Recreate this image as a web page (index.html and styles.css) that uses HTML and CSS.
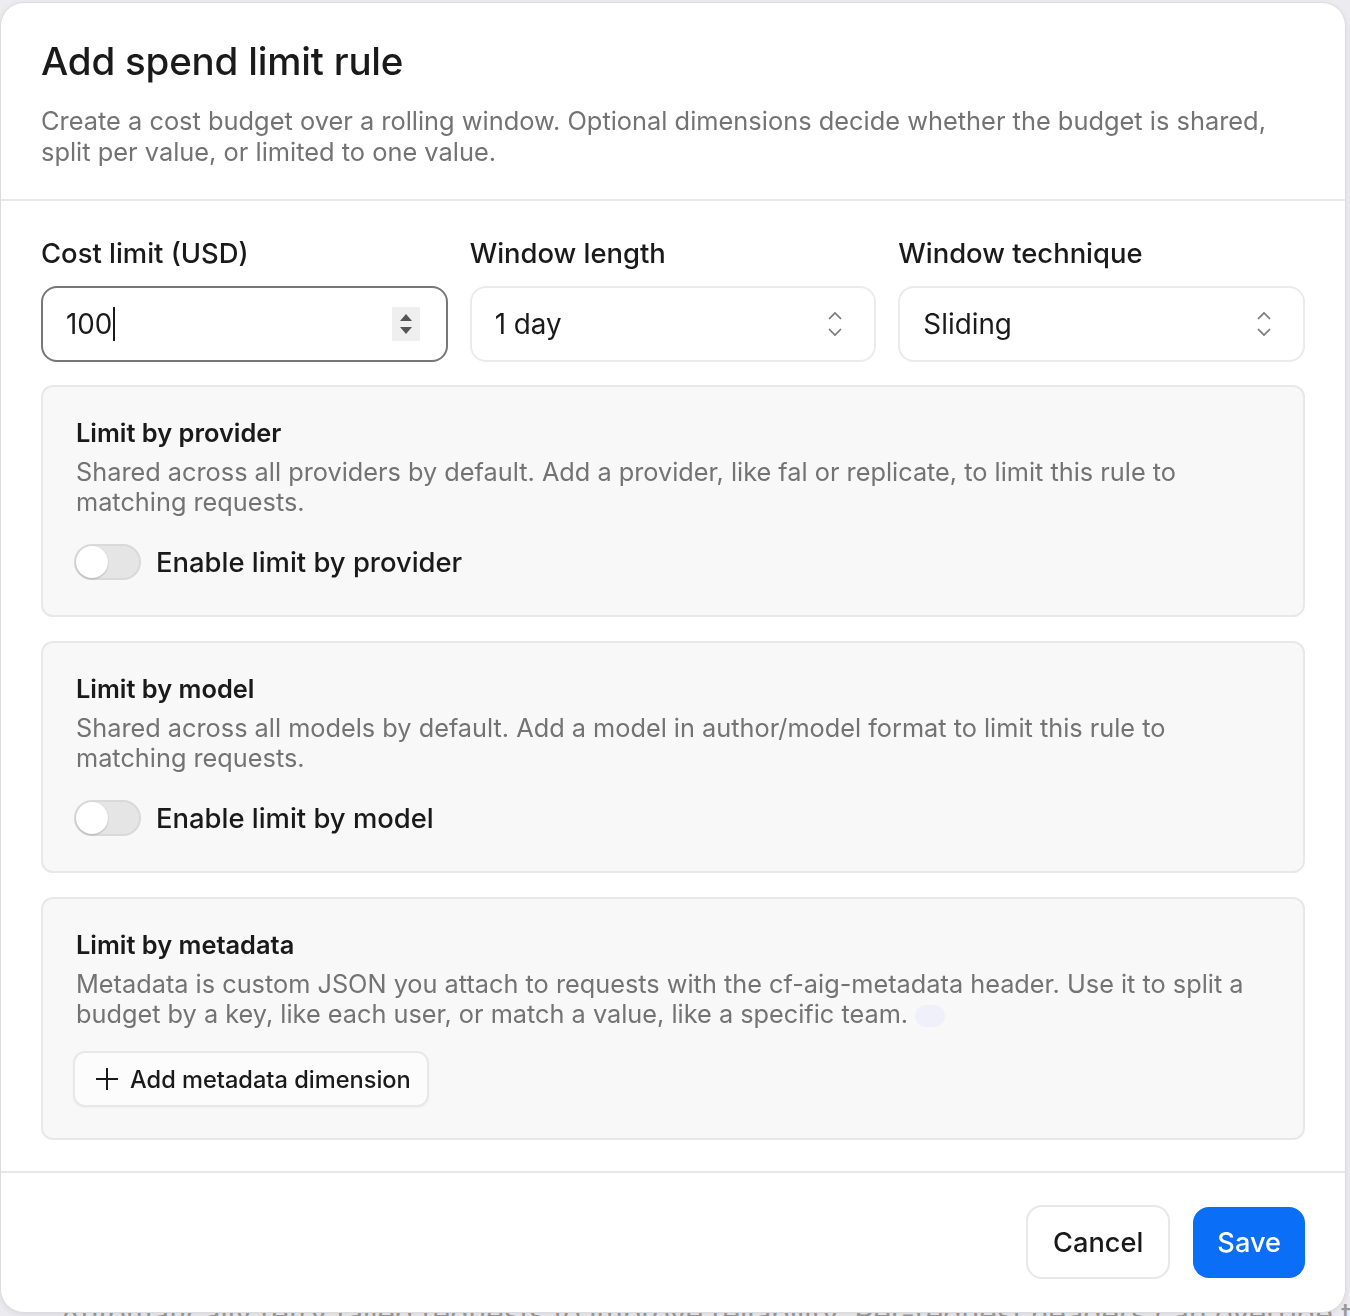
FILE: index.html
```html
<!DOCTYPE html>
<html>
<head>
  <meta charset="utf-8">
  <title>Add spend limit rule</title>
  <link rel="stylesheet" href="styles.css">
</head>
<body>
  <!-- Page behind the modal -->
  <div class="page">
    <p class="page-note">Automatically retry failed requests to improve reliability. Per-request headers can override these defaults.</p>
  </div>

  <div class="dialog">
    <div class="dialog-header">
      <h1>Add spend limit rule</h1>
      <p class="dialog-description">Create a cost budget over a rolling window. Optional dimensions decide whether the budget is shared, split per value, or limited to one value.</p>
    </div>

    <div class="dialog-body">
      <!-- Main fields -->
      <div class="field-row">
        <div class="field">
          <label class="field-label">Cost limit (USD)</label>
          <div class="control focused">
            <span class="control-value">100<span class="caret"></span></span>
            <span class="spinner">
              <svg width="16" height="28" viewBox="0 0 16 28"><path d="M8 4 L14 11 L2 11 Z" fill="#555"/><path d="M2 17 L14 17 L8 24 Z" fill="#555"/></svg>
            </span>
          </div>
        </div>
        <div class="field">
          <label class="field-label">Window length</label>
          <div class="control">
            <span class="control-value">1 day</span>
            <svg class="chevrons" width="20" height="30" viewBox="0 0 20 30"><path d="M4 10 L10 4 L16 10" fill="none" stroke="#777" stroke-width="1.6"/><path d="M4 20 L10 26 L16 20" fill="none" stroke="#777" stroke-width="1.6"/></svg>
          </div>
        </div>
        <div class="field">
          <label class="field-label">Window technique</label>
          <div class="control">
            <span class="control-value">Sliding</span>
            <svg class="chevrons" width="20" height="30" viewBox="0 0 20 30"><path d="M4 10 L10 4 L16 10" fill="none" stroke="#777" stroke-width="1.6"/><path d="M4 20 L10 26 L16 20" fill="none" stroke="#777" stroke-width="1.6"/></svg>
          </div>
        </div>
      </div>

      <!-- Dimension cards -->
      <div class="dimension-card">
        <h3>Limit by provider</h3>
        <p class="card-description">Shared across all providers by default. Add a provider, like fal or replicate, to limit this rule to matching requests.</p>
        <div class="switch-row">
          <span class="switch"><span class="switch-knob"></span></span>
          <span class="switch-label">Enable limit by provider</span>
        </div>
      </div>

      <div class="dimension-card">
        <h3>Limit by model</h3>
        <p class="card-description">Shared across all models by default. Add a model in author/model format to limit this rule to matching requests.</p>
        <div class="switch-row">
          <span class="switch"><span class="switch-knob"></span></span>
          <span class="switch-label">Enable limit by model</span>
        </div>
      </div>

      <div class="dimension-card metadata-card">
        <h3>Limit by metadata</h3>
        <p class="card-description">Metadata is custom JSON you attach to requests with the cf-aig-metadata header. Use it to split a budget by a key, like each user, or match a value, like a specific team. <span class="hint-dot"></span></p>
        <button class="add-button">
          <svg width="26" height="26" viewBox="0 0 26 26"><path d="M13 2 V24 M2 13 H24" stroke="#1a1a1a" stroke-width="2"/></svg>
          <span>Add metadata dimension</span>
        </button>
      </div>
    </div>

    <div class="dialog-footer">
      <button class="btn btn-secondary">Cancel</button>
      <button class="btn btn-primary">Save</button>
    </div>
  </div>
</body>
</html>
```

FILE: styles.css
```css
body {
  margin: 0;
  font-family: Inter, 'Noto Sans', sans-serif;
  color: #1a1a1a;
  background: #ebebf0;
}

.page {
  padding: 1296px 0 0 60px;
  height: 20px;
  overflow: hidden;
}

.page-note {
  margin: 0;
  font-size: 30px;
  line-height: 36px;
  color: #9a9a9a;
  white-space: nowrap;
}

/* Modal */
.dialog {
  position: fixed;
  top: 2px;
  left: 0;
  width: 1346px;
  box-sizing: border-box;
  background: white;
  border: 1px solid #dcdcdc;
  border-radius: 24px;
  box-shadow: 0 2px 6px rgba(0, 0, 0, 0.08);
}

.dialog-header {
  padding: 36px 40px 32px;
  border-bottom: 2px solid #e8e8e8;
}

.dialog-header h1 {
  margin: 0 0 22px 0;
  font-size: 38.5px;
  font-weight: 500;
  line-height: 44px;
  letter-spacing: -0.2px;
}

.dialog-description {
  margin: 0;
  font-size: 25.4px;
  line-height: 31px;
  color: #737373;
}

.dialog-body {
  padding: 34px 40px 31px;
  display: flex;
  flex-direction: column;
  gap: 24px;
}

.field-row {
  display: grid;
  grid-template-columns: repeat(3, 1fr);
  gap: 22px;
  margin-bottom: -1px;
}

.field {
  display: flex;
  flex-direction: column;
  gap: 15px;
}

.field-label {
  font-size: 27.4px;
  font-weight: 500;
  line-height: 36px;
}

.control {
  height: 76px;
  box-sizing: border-box;
  border: 2px solid #ebebeb;
  border-radius: 16px;
  padding: 0 26px 0 23px;
  display: flex;
  align-items: center;
  justify-content: space-between;
}

.control.focused {
  border-color: #777;
}

.control-value {
  font-size: 27.8px;
  display: flex;
  align-items: center;
}

.caret {
  display: inline-block;
  width: 2px;
  height: 34px;
  background: #1a1a1a;
  margin-left: 1px;
}

.spinner {
  width: 28px;
  height: 34px;
  background: #efefef;
  display: flex;
  align-items: center;
  justify-content: center;
}

.chevrons {
  margin-right: 3px;
}

/* Dimension cards */
.dimension-card {
  background: #f8f8f8;
  border: 2px solid #e8e8e8;
  border-radius: 12px;
  padding: 30px 33px 35px;
}

.dimension-card h3 {
  margin: 0 0 8px 0;
  font-size: 25.4px;
  font-weight: 600;
  line-height: 32px;
}

.card-description {
  margin: 0;
  font-size: 25.3px;
  line-height: 30px;
  color: #737373;
}

.hint-dot {
  display: inline-block;
  width: 30px;
  height: 22px;
  border-radius: 11px;
  background: #f0f0fb;
  vertical-align: middle;
}

.switch-row {
  display: flex;
  align-items: center;
  gap: 15px;
  margin-top: 27px;
  margin-left: -2px;
}

.switch {
  width: 67px;
  height: 36px;
  box-sizing: border-box;
  border-radius: 18px;
  background: #e5e5e5;
  border: 2px solid #d9d9d9;
  display: flex;
  align-items: center;
}

.switch-knob {
  width: 32px;
  height: 32px;
  border-radius: 50%;
  background: white;
  box-shadow: 0 1px 2px rgba(0, 0, 0, 0.2);
}

.switch-label {
  font-size: 27.4px;
  font-weight: 500;
}

.add-button {
  margin-top: 22px;
  margin-left: -3px;
  display: flex;
  align-items: center;
  gap: 10px;
  height: 56px;
  padding: 0 16px 0 19px;
  border: 2px solid #e8e8e8;
  border-radius: 12px;
  background: #fcfcfc;
  font-family: inherit;
  font-size: 23.6px;
  font-weight: 500;
  color: #1a1a1a;
  box-shadow: 0 1px 2px rgba(0, 0, 0, 0.04);
}

.metadata-card {
  padding-bottom: 31px;
}

/* Footer */
.dialog-footer {
  border-top: 2px solid #e8e8e8;
  padding: 32px 40px 33px;
  display: flex;
  justify-content: flex-end;
  align-items: center;
  gap: 23px;
}

.btn {
  font-family: inherit;
  font-size: 27.2px;
  font-weight: 500;
  border-radius: 16px;
  cursor: pointer;
}

.btn-secondary {
  height: 74px;
  padding: 0 25px;
  background: white;
  color: #1a1a1a;
  border: 2px solid #e8e8e8;
}

.btn-primary {
  height: 71px;
  padding: 0 24px;
  background: #0a6ef7;
  color: white;
  border: none;
}
```
